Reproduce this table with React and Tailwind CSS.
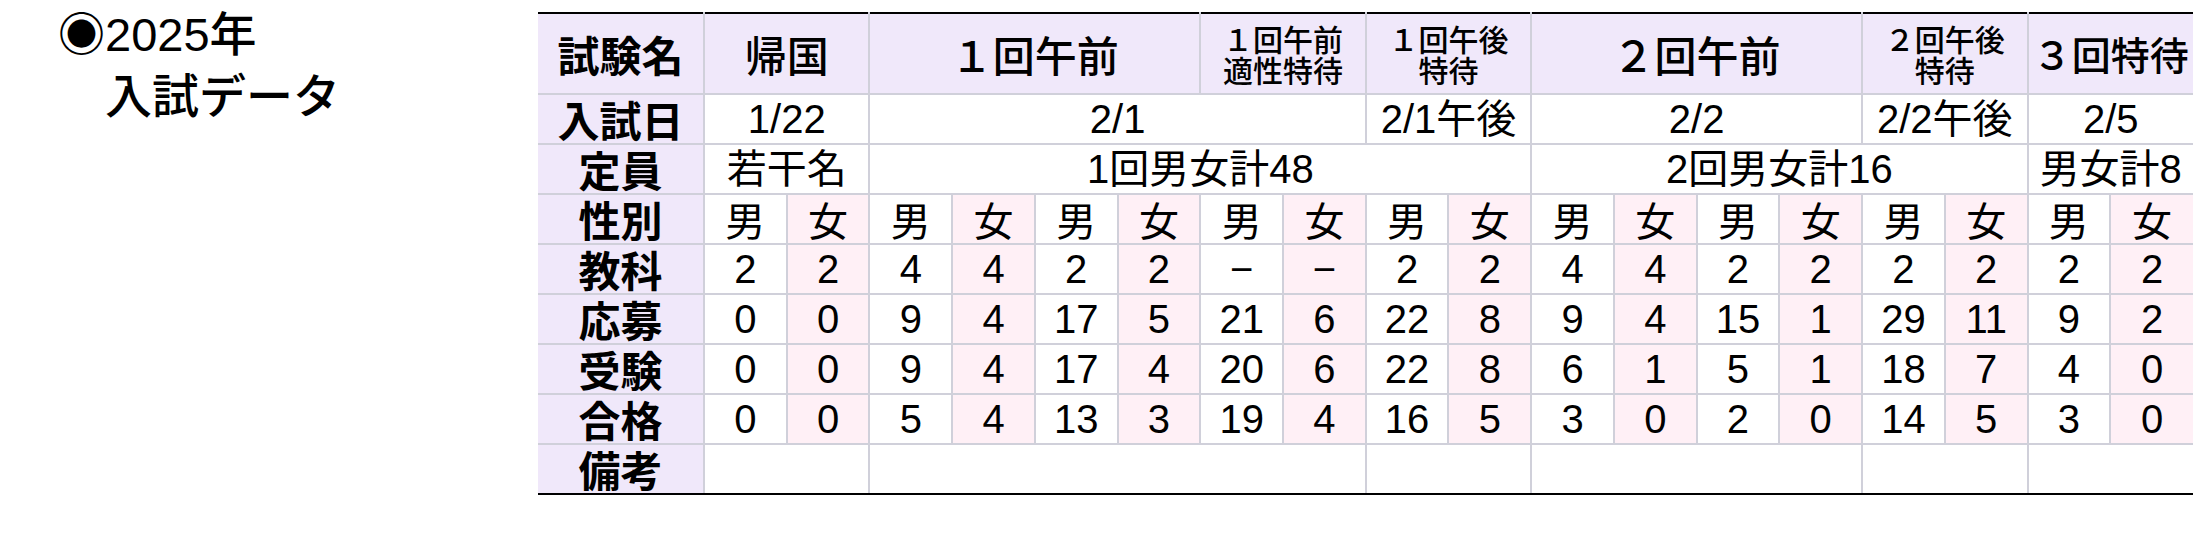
import React from "react";

const LAV = "bg-[#f0e8fa]";
const PINK = "bg-[#fff0f6]";
const B = "border-[2px] border-[#d0d0da]";
const DATA = "font-['Liberation_Sans','Noto_Sans_CJK_JP',sans-serif]";

const headers = [
  { t: "帰国", s: 2 },
  { t: "１回午前", s: 4 },
  { t: ["１回午前", "適性特待"], s: 2 },
  { t: ["１回午後", "特待"], s: 2 },
  { t: "２回午前", s: 4 },
  { t: ["２回午後", "特待"], s: 2 },
  { t: "３回特待", s: 2, small: true },
];

const dates = [
  ["1/22", 2],
  ["2/1", 6],
  ["2/1午後", 2],
  ["2/2", 4],
  ["2/2午後", 2],
  ["2/5", 2],
];

const quota = [
  ["若干名", 2],
  ["1回男女計48", 8],
  ["2回男女計16", 6],
  ["男女計8", 2],
];

const notes = [2, 6, 2, 4, 2, 2];

const rows = [
  ["教科", ["2", "2", "4", "4", "2", "2", "−", "−", "2", "2", "4", "4", "2", "2", "2", "2", "2", "2"]],
  ["応募", ["0", "0", "9", "4", "17", "5", "21", "6", "22", "8", "9", "4", "15", "1", "29", "11", "9", "2"]],
  ["受験", ["0", "0", "9", "4", "17", "4", "20", "6", "22", "8", "6", "1", "5", "1", "18", "7", "4", "0"]],
  ["合格", ["0", "0", "5", "4", "13", "3", "19", "4", "16", "5", "3", "0", "2", "0", "14", "5", "3", "0"]],
];

function Label({ children }) {
  return (
    <td className={`${B} border-l-0 ${LAV} text-center font-bold text-[42px] leading-none whitespace-nowrap`}>
      {children}
    </td>
  );
}

export default function App() {
  const gender = Array.from({ length: 18 }, (_, i) => (i % 2 === 0 ? "男" : "女"));
  return (
    <div className="flex items-start w-[2210px] h-[560px] bg-white text-black">
      <div className="w-[538px] shrink-0 pl-[58px] pt-[4px] text-[47px] leading-[62px] font-medium font-['Liberation_Sans','Noto_Sans_CJK_JP',sans-serif]">
        <div>◉2025年</div>
        <div>　入試データ</div>
      </div>
      <table className="mt-[12px] w-[1655px] table-fixed border-collapse border-t-[2px] border-t-black border-b-[2px] border-b-black font-['Noto_Sans_CJK_JP',sans-serif]">
        <colgroup>
          <col className="w-[166px]" />
          {gender.map((_, i) => (
            <col key={i} />
          ))}
        </colgroup>
        <tbody>
          <tr className="h-[81px]">
            <td className={`${B} border-l-0 border-t-black ${LAV} text-center font-bold text-[42px] leading-none whitespace-nowrap`}>試験名</td>
            {headers.map((h, i) => (
              <td
                key={i}
                colSpan={h.s}
                className={`${B} border-t-black ${i === headers.length - 1 ? "border-r-0" : ""} ${LAV} text-center whitespace-nowrap font-medium ${
                  Array.isArray(h.t)
                    ? "text-[30px] leading-[31px]"
                    : h.small
                    ? "text-[39px] leading-none"
                    : "text-[42px] leading-none"
                }`}
              >
                {Array.isArray(h.t) ? (
                  <>
                    <div>{h.t[0]}</div>
                    <div>{h.t[1]}</div>
                  </>
                ) : (
                  h.t
                )}
              </td>
            ))}
          </tr>
          <tr className="h-[50px]">
            <Label>入試日</Label>
            {dates.map(([t, s], i) => (
              <td key={i} colSpan={s} className={`${B} ${DATA} ${i === dates.length - 1 ? "border-r-0" : ""} text-center text-[40px] leading-none whitespace-nowrap`}>
                {t}
              </td>
            ))}
          </tr>
          <tr className="h-[50px]">
            <Label>定員</Label>
            {quota.map(([t, s], i) => (
              <td key={i} colSpan={s} className={`${B} ${DATA} ${i === quota.length - 1 ? "border-r-0" : ""} text-center text-[40px] leading-none whitespace-nowrap`}>
                {t}
              </td>
            ))}
          </tr>
          <tr className="h-[50px]">
            <Label>性別</Label>
            {gender.map((g, i) => (
              <td key={i} className={`${B} ${i === 17 ? "border-r-0" : ""} ${i % 2 === 1 ? PINK : "bg-white"} text-center text-[40px] leading-none`}>
                {g}
              </td>
            ))}
          </tr>
          {rows.map(([label, vals]) => (
            <tr key={label} className="h-[50px]">
              <Label>{label}</Label>
              {vals.map((v, i) => (
                <td key={i} className={`${B} ${DATA} ${i === 17 ? "border-r-0" : ""} ${i % 2 === 1 ? PINK : "bg-white"} text-center text-[40px] leading-none`}>
                  {v}
                </td>
              ))}
            </tr>
          ))}
          <tr className="h-[50px]">
            <td className={`${B} border-l-0 border-b-black ${LAV} text-center font-bold text-[42px] leading-none`}>備考</td>
            {notes.map((s, i) => (
              <td key={i} colSpan={s} className={`${B} border-b-black ${i === notes.length - 1 ? "border-r-0" : ""} bg-white`}></td>
            ))}
          </tr>
        </tbody>
      </table>
    </div>
  );
}
